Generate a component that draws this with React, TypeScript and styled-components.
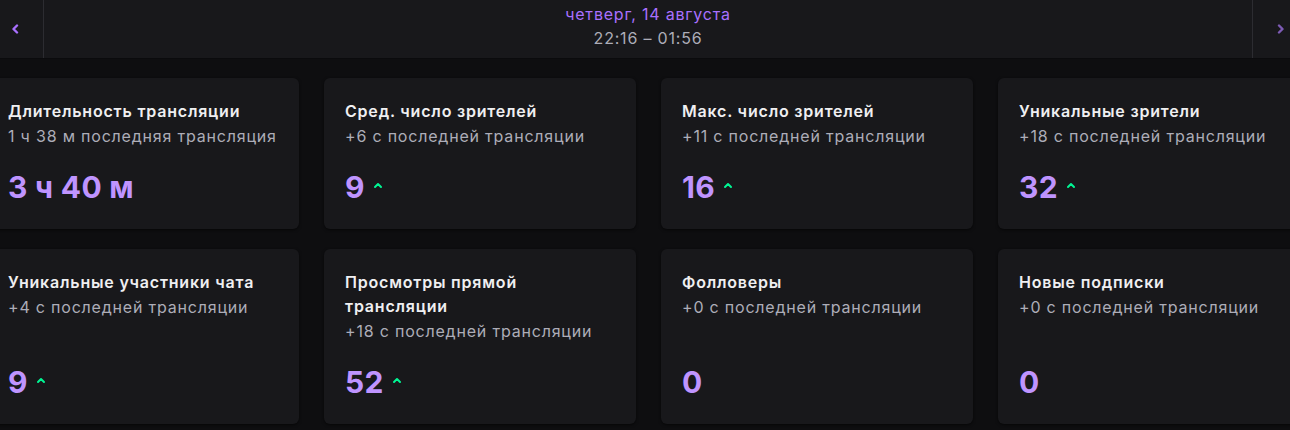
import React from "react";
import styled, { createGlobalStyle } from "styled-components";

const GlobalStyle = createGlobalStyle`
  html, body {
    margin: 0;
    padding: 0;
    background: #0e0e10;
    overflow: hidden;
  }
  body {
    font-family: Inter, "Noto Sans", "Liberation Sans", sans-serif;
    color: #efeff1;
    -webkit-font-smoothing: antialiased;
  }
`

interface Stat {
  title: string
  delta: string
  value: string
  up?: boolean
}

const stats: Stat[] = [
  { title: "Длительность трансляции", delta: "1 ч 38 м последняя трансляция", value: "3 ч 40 м" },
  { title: "Сред. число зрителей", delta: "+6 с последней трансляции", value: "9", up: true },
  { title: "Макс. число зрителей", delta: "+11 с последней трансляции", value: "16", up: true },
  { title: "Уникальные зрители", delta: "+18 с последней трансляции", value: "32", up: true },
  { title: "Уникальные участники чата", delta: "+4 с последней трансляции", value: "9", up: true },
  { title: "Просмотры прямой трансляции", delta: "+18 с последней трансляции", value: "52", up: true },
  { title: "Фолловеры", delta: "+0 с последней трансляции", value: "0" },
  { title: "Новые подписки", delta: "+0 с последней трансляции", value: "0" },
]

const Page = styled.div`
  width: 1290px;
  height: 430px;
  display: flex;
  flex-direction: column;
  gap: 20px;
  overflow: hidden;
`

const Header = styled.header`
  height: 58px;
  flex-shrink: 0;
  display: flex;
  background: #18181b;
  box-shadow: 0 1px 0 #0b0b0d;
`

type NavProps = { side: "left" | "right" }
const NavButton = styled.button<NavProps>`
  width: ${props => props.side === "left" ? 44 : 38}px;
  flex-shrink: 0;
  border: none;
  background: transparent;
  padding: 0;
  display: flex;
  align-items: center;
  justify-content: ${props => props.side === "left" ? "flex-start" : "flex-end"};
  padding-left: ${props => props.side === "left" ? 11 : 0}px;
  padding-right: ${props => props.side === "right" ? 5 : 0}px;
  border-left: ${props => props.side === "right" ? "1px solid #2c2c31" : "none"};
  border-right: ${props => props.side === "left" ? "1px solid #2c2c31" : "none"};
  color: ${props => props.side === "left" ? "#a970ff" : "#7d5bb4"};
  cursor: pointer;
`

const DateBlock = styled.div`
  flex: 1;
  display: flex;
  flex-direction: column;
  align-items: center;
  padding-top: 2px;
  font-size: 16px;
  letter-spacing: 0.8px;
  line-height: 24px;
`

const DateLine = styled.span`
  color: #a970ff;
`

const TimeLine = styled.span`
  color: #adadb8;
`

const Grid = styled.div`
  display: grid;
  grid-template-columns: repeat(4, 312px);
  column-gap: 25px;
  row-gap: 20px;
  margin-left: -13px;
`

const Card = styled.div`
  background: #18181b;
  border-radius: 6px;
  box-shadow: 0 1px 3px rgba(0, 0, 0, 0.6);
  padding: 21px 16px 24px 21px;
  display: flex;
  flex-direction: column;
  letter-spacing: 0.8px;
`

const Title = styled.div`
  font-size: 16px;
  font-weight: 600;
  line-height: 24px;
  color: #efeff1;
`

const Delta = styled.div`
  font-size: 16px;
  line-height: 24px;
  margin-top: 1px;
  color: #adadb8;
`

const ValueRow = styled.div`
  margin-top: auto;
  padding-top: 21px;
  display: flex;
  align-items: center;
  gap: 8px;
  height: 36px;
  box-sizing: content-box;
`

const Value = styled.span`
  font-size: 30px;
  font-weight: 700;
  letter-spacing: 0.3px;
  line-height: 36px;
  color: #bf94ff;
`

const Chevron = ({ dir }: { dir: "left" | "right" }) => (
  <svg width="8" height="10" viewBox="0 0 8 10" fill="none">
    <polyline
      points={dir === "left" ? "6,1.5 2.5,5 6,8.5" : "2,1.5 5.5,5 2,8.5"}
      stroke="currentColor"
      strokeWidth="2.4"
      strokeLinecap="round"
      strokeLinejoin="round"
    />
  </svg>
)

const UpArrow = () => (
  <svg width="10" height="8" viewBox="0 0 10 8" fill="none" style={{ marginTop: -4 }}>
    <polyline
      points="2,6 5,3 8,6"
      stroke="#00f593"
      strokeWidth="2"
      strokeLinecap="round"
      strokeLinejoin="round"
    />
  </svg>
)

export default function App() {
  return <>
    <GlobalStyle />
    <Page>
      <Header>
        <NavButton side="left"><Chevron dir="left" /></NavButton>
        <DateBlock>
          <DateLine>четверг, 14 августа</DateLine>
          <TimeLine>22:16 – 01:56</TimeLine>
        </DateBlock>
        <NavButton side="right"><Chevron dir="right" /></NavButton>
      </Header>
      <Grid>
        {stats.map((s) => (
          <Card key={s.title}>
            <Title>{s.title}</Title>
            <Delta>{s.delta}</Delta>
            <ValueRow>
              <Value>{s.value}</Value>
              {s.up && <UpArrow />}
            </ValueRow>
          </Card>
        ))}
      </Grid>
    </Page>
  </>
}
